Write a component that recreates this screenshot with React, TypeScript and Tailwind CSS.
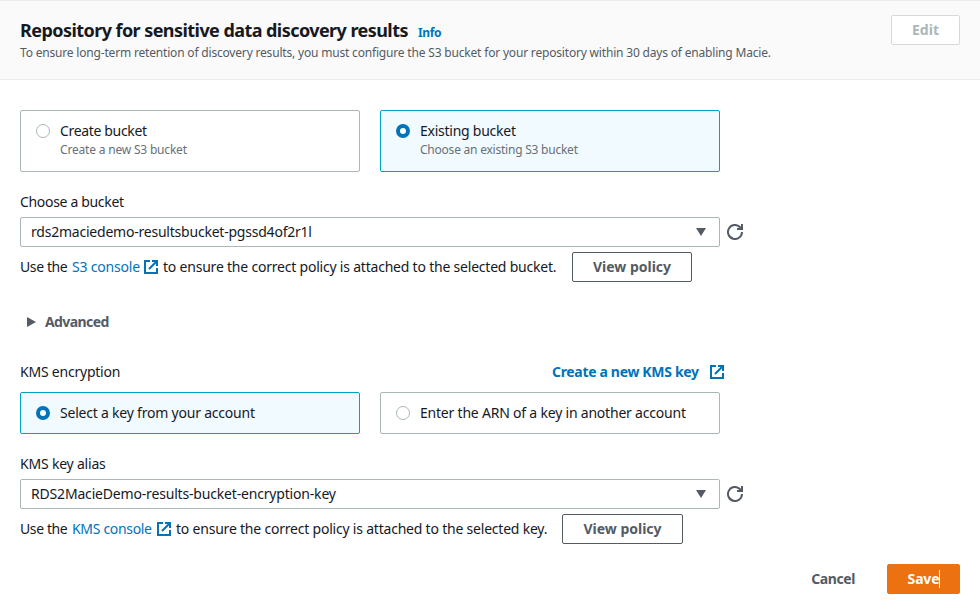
import type { ReactNode } from "react";

function ExternalIcon({ className = "" }: { className?: string }) {
  return (
    <svg className={`h-4 w-4 shrink-0 text-[#0073bb] ${className}`} viewBox="0 0 16 16" fill="none" stroke="currentColor" strokeWidth="2">
      <path d="M7 2H2v12h12V9" />
      <path d="M9 2h5v5M6 10l7.5-7.5" />
    </svg>
  );
}

function RefreshIcon() {
  return (
    <svg className="h-4 w-4 shrink-0 text-[#545b64]" viewBox="0 0 16 16" fill="none" stroke="currentColor" strokeWidth="2">
      <path d="M15 8a7 7 0 1 1-2.2-5.1L14.5 5" />
      <path d="M15 0v5h-5" />
    </svg>
  );
}

function Radio({ checked }: { checked: boolean }) {
  return checked ? (
    <span className="h-3.5 w-3.5 shrink-0 rounded-full border-4 border-[#0073bb] bg-white" />
  ) : (
    <span className="h-3.5 w-3.5 shrink-0 rounded-full border border-[#aab7b8] bg-white" />
  );
}

function Tile({ checked, tall, children }: { checked: boolean; tall?: boolean; children: ReactNode }) {
  return (
    <div
      className={`flex w-[340px] gap-2.5 rounded-[2px] border pt-[9px] pl-[15px] ${tall ? "h-[62px]" : "h-[42px]"} ${
        checked ? "border-[#00a1c9] bg-[#f1faff]" : "border-[#aab7b8] bg-white"
      }`}
    >
      <div className="flex h-[22px] items-center">
        <Radio checked={checked} />
      </div>
      <div>{children}</div>
    </div>
  );
}

function SelectBox({ children }: { children: ReactNode }) {
  return (
    <div className="mt-1 flex items-center gap-[7px]">
      <div className="flex h-[30px] w-[700px] items-center justify-between rounded-[2px] border border-[#aab7b8] bg-white pr-[13px] pl-2.5">
        {children}
        <svg className="h-2 w-2.5 text-[#545b64]" viewBox="0 0 10 8" fill="currentColor">
          <path d="M0 0h10L5 8z" />
        </svg>
      </div>
      <RefreshIcon />
    </div>
  );
}

function Button({ className, children }: { className: string; children: ReactNode }) {
  return (
    <button className={`flex h-[30px] items-center justify-center rounded-[2px] border font-bold whitespace-nowrap ${className}`}>
      {children}
    </button>
  );
}

export default function App() {
  return (
    <div className="h-[613px] w-[980px] overflow-hidden bg-white font-['Noto_Sans','Open_Sans',sans-serif] text-[14px] leading-[22px] whitespace-nowrap text-[#16191f]">
      <header className="flex h-20 justify-between border-t border-b border-[#eaeded] bg-[#fafafa] pr-5 pl-5">
        <div className="pt-[18px]">
          <div className="flex items-baseline gap-2.5">
            <h1 className="w-[388px] text-[18px] leading-[22px] font-bold tracking-[-0.56px]">
              Repository for sensitive data discovery results
            </h1>
            <a className="text-[12px] leading-4 font-bold tracking-[-0.4px] text-[#0073bb]">Info</a>
          </div>
          <p className="mt-1 text-[12px] leading-4 tracking-[-0.183px] text-[#545b64]">
            To ensure long-term retention of discovery results, you must configure the S3 bucket for your repository within 30
            days of enabling Macie.
          </p>
        </div>
        <Button className="mt-3.5 w-[69px] border-[#d5dbdb] bg-white text-[#aab7b8]">Edit</Button>
      </header>

      <main className="px-5 pt-[30px]">
        <div className="flex gap-5">
          <Tile checked={false} tall>
            <div className="tracking-[-0.34px]">Create bucket</div>
            <div className="text-[12px] leading-4 tracking-[-0.19px] text-[#687078]">Create a new S3 bucket</div>
          </Tile>
          <Tile checked tall>
            <div className="tracking-[-0.25px]">Existing bucket</div>
            <div className="text-[12px] leading-4 tracking-[-0.227px] text-[#687078]">Choose an existing S3 bucket</div>
          </Tile>
        </div>

        <div className="mt-[19px] tracking-[-0.327px]">Choose a bucket</div>
        <SelectBox>
          <span className="tracking-[-0.22px]">rds2maciedemo-resultsbucket-pgssd4of2r1l</span>
        </SelectBox>
        <div className="mt-[5px] flex h-[30px] items-center">
          <span className="w-[52px] tracking-[-0.4px]">Use the</span>
          <a className="w-[67px] tracking-[-0.2px] text-[#0073bb]">S3 console</a>
          <ExternalIcon className="ml-1" />
          <span className="ml-1 w-[394px] tracking-[-0.21px]">
            to ensure the correct policy is attached to the selected bucket.
          </span>
          <Button className="ml-[15px] w-[120px] border-[#545b64] bg-white text-[#545b64]">View policy</Button>
        </div>

        <div className="mt-[29px] flex items-center gap-[9px] pl-[7px] font-bold text-[#545b64]">
          <svg className="h-2.5 w-[9px]" viewBox="0 0 9 10" fill="currentColor">
            <path d="M0 0l9 5-9 5z" />
          </svg>
          <span className="tracking-[-0.6px]">Advanced</span>
        </div>

        <div className="mt-7 flex w-[705px] items-center">
          <span className="grow tracking-[-0.22px]">KMS encryption</span>
          <a className="w-[147px] font-bold tracking-[-0.327px] text-[#0073bb]">Create a new KMS key</a>
          <ExternalIcon className="ml-[10px]" />
        </div>
        <div className="mt-[9px] flex gap-5">
          <Tile checked>
            <span className="tracking-[-0.214px]">Select a key from your account</span>
          </Tile>
          <Tile checked={false}>
            <span className="tracking-[-0.208px]">Enter the ARN of a key in another account</span>
          </Tile>
        </div>

        <div className="mt-[19px] tracking-[-0.2px]">KMS key alias</div>
        <SelectBox>
          <span className="tracking-[-0.178px]">RDS2MacieDemo-results-bucket-encryption-key</span>
        </SelectBox>
        <div className="mt-[5px] flex h-[30px] items-center">
          <span className="w-[52px] tracking-[-0.4px]">Use the</span>
          <a className="w-20 tracking-[-0.322px] text-[#0073bb]">KMS console</a>
          <ExternalIcon className="ml-1" />
          <span className="ml-1 w-[372px] tracking-[-0.21px]">
            to ensure the correct policy is attached to the selected key.
          </span>
          <Button className="ml-[14px] w-[121px] border-[#545b64] bg-white text-[#545b64]">View policy</Button>
        </div>

        <footer className="mt-5 flex justify-end">
          <Button className="mr-[31px] border-transparent tracking-[-0.4px] text-[#545b64]">Cancel</Button>
          <Button className="w-[73px] border-[#ec7211] bg-[#ec7211] text-white">
            <span className="tracking-[-0.15px]">Save</span>
            <span className="-mr-px h-[18px] w-px bg-white" />
          </Button>
        </footer>
      </main>
    </div>
  );
}
